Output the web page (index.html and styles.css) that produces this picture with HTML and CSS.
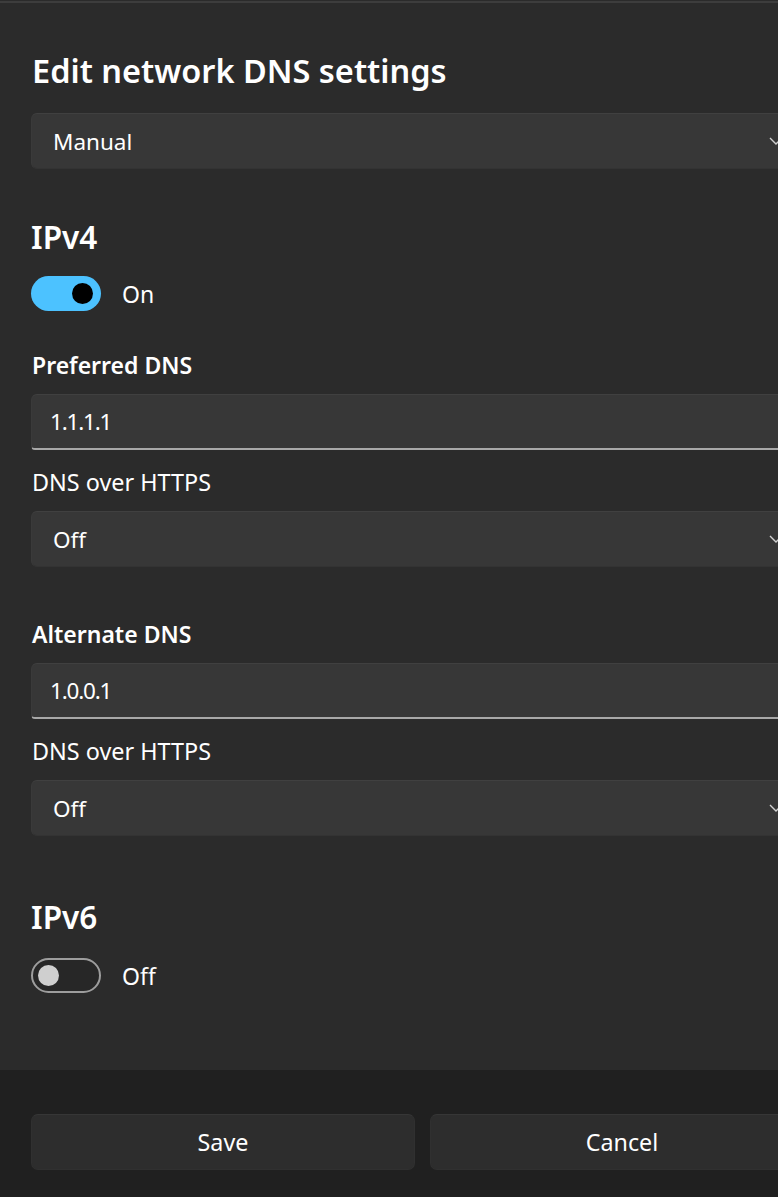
FILE: index.html
```html
<!DOCTYPE html>
<html lang="en">
<head>
<meta charset="utf-8">
<title>Edit network DNS settings</title>
<link rel="stylesheet" href="styles.css">
</head>
<body>
<div class="dialog">
  <div class="panel">
    <h1 class="title">Edit network DNS settings</h1>
    <div class="select mt-title"><span>Manual</span><svg class="chev" viewBox="0 0 14 8" width="14" height="8"><polyline points="1,1 7,7 13,1" fill="none" stroke="#d0d0d0" stroke-width="1.4"/></svg></div>

    <h2 class="section mt-sec1">IPv4</h2>
    <div class="toggle-row mt-tog1"><span class="toggle on"><span class="knob"></span></span><span class="toggle-label">On</span></div>

    <div class="label mt-lab1">Preferred DNS</div>
    <div class="textbox mt-box">1.1.1.1</div>
    <div class="sublabel mt-sub">DNS over HTTPS</div>
    <div class="select mt-box"><span>Off</span><svg class="chev" viewBox="0 0 14 8" width="14" height="8"><polyline points="1,1 7,7 13,1" fill="none" stroke="#d0d0d0" stroke-width="1.4"/></svg></div>

    <div class="label mt-lab2">Alternate DNS</div>
    <div class="textbox mt-box">1.0.0.1</div>
    <div class="sublabel mt-sub">DNS over HTTPS</div>
    <div class="select mt-box"><span>Off</span><svg class="chev" viewBox="0 0 14 8" width="14" height="8"><polyline points="1,1 7,7 13,1" fill="none" stroke="#d0d0d0" stroke-width="1.4"/></svg></div>

    <h2 class="section mt-sec2">IPv6</h2>
    <div class="toggle-row mt-tog2"><span class="toggle off"><span class="knob"></span></span><span class="toggle-label">Off</span></div>
  </div>
  <div class="footer">
    <button class="btn">Save</button>
    <button class="btn">Cancel</button>
  </div>
</div>
</body>
</html>
```
FILE: styles.css
```css
html, body {
  margin: 0;
  padding: 0;
  background: #2b2b2b;
  overflow: hidden;
}
body {
  font-family: "Noto Sans", "Open Sans", sans-serif;
  color: #ffffff;
  width: 778px;
  height: 1197px;
}
.dialog {
  width: 846px;
  padding-top: 1px;
}
.panel {
  background: #2b2b2b;
  border-top: 2px solid #3d3d3d;
  padding: 50px 32px 77px 31px;
  display: flex;
  flex-direction: column;
}
.title {
  margin: 0;
  font-size: 32.5px;
  line-height: 36px;
  font-weight: 600;
  padding-left: 1px;
}
.select, .textbox {
  height: 56px;
  box-sizing: border-box;
  background: #373737;
  border: 1px solid #3a3a3a;
  border-top-color: #404040;
  border-radius: 6px;
  display: flex;
  align-items: center;
  font-size: 22.5px;
}
.select {
  justify-content: space-between;
  padding: 0 30px 0 21px;
  border-bottom-color: #333333;
}
.textbox {
  padding-left: 18px;
  border-bottom: 2px solid #a8a8a8;
  border-radius: 6px 6px 4px 4px;
  letter-spacing: -1.2px;
}
.chev { display: block; }
.section {
  margin: 0;
  font-size: 31.5px;
  line-height: 40px;
  font-weight: 600;
}
.toggle-row {
  display: flex;
  align-items: center;
  gap: 21px;
  height: 35px;
}
.toggle {
  width: 70px;
  height: 35px;
  box-sizing: border-box;
  border-radius: 18px;
  display: flex;
  align-items: center;
}
.toggle.on {
  background: #4cc2ff;
  justify-content: flex-end;
  padding-right: 8px;
}
.toggle.on .knob {
  width: 21px;
  height: 21px;
  border-radius: 50%;
  background: #000000;
}
.toggle.off {
  border: 2px solid #9d9d9d;
  background: #272727;
  padding-left: 5px;
}
.toggle.off .knob {
  width: 21px;
  height: 21px;
  border-radius: 50%;
  background: #cfcfcf;
}
.toggle-label {
  font-size: 23px;
}
.label {
  font-size: 23px;
  line-height: 28px;
  font-weight: 600;
  padding-left: 1px;
}
.sublabel {
  font-size: 23.4px;
  line-height: 28px;
  padding-left: 1px;
}
.mt-title { margin-top: 24px; }
.mt-sec1 { margin-top: 48px; }
.mt-tog1 { margin-top: 19px; }
.mt-lab1 { margin-top: 40px; }
.mt-box { margin-top: 15px; }
.mt-sub { margin-top: 18px; }
.mt-lab2 { margin-top: 53px; }
.mt-sec2 { margin-top: 61px; }
.mt-tog2 { margin-top: 21px; }
.footer {
  background: #202020;
  height: 127px;
  box-sizing: border-box;
  padding: 44px 32px 0 31px;
  display: flex;
  gap: 15px;
}
.btn {
  flex: 1;
  height: 56px;
  background: #2d2d2d;
  border: 1px solid #303030;
  border-top-color: #363636;
  border-radius: 7px;
  color: #ffffff;
  font-family: "Noto Sans", "Open Sans", sans-serif;
  font-size: 23.3px;
  padding: 0;
}
```
